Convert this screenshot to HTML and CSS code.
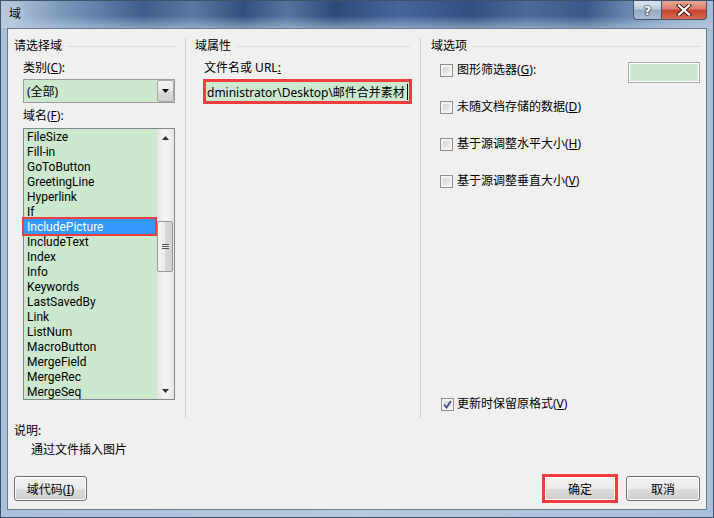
FILE: index.html
```html
<!DOCTYPE html>
<html lang="zh-CN">

<head>
  <meta charset="UTF-8">
  <title>域</title>
  <link rel="stylesheet" href="styles.css">
</head>

<body>
  <div class="window">
    <div class="titlebar">
      <span class="title">域</span>
      <div class="caption-buttons">
        <span class="cap-btn help">?</span>
        <span class="cap-btn close">
          <svg width="16" height="12" viewBox="0 0 16 12">
            <path d="M3 1.5 L13 10.5 M13 1.5 L3 10.5" stroke="#4a1d16" stroke-width="4.2" stroke-linecap="square" />
            <path d="M3 1.5 L13 10.5 M13 1.5 L3 10.5" stroke="#fff" stroke-width="2.2" stroke-linecap="square" />
          </svg>
        </span>
      </div>
    </div>

    <div class="frame">
      <div class="client">
        <div class="panes">
          <!-- 请选择域 -->
          <section class="pane pane-select">
            <div class="group-title"><span>请选择域</span></div>
            <div class="field-label">类别(<u>C</u>):</div>
            <div class="combo">
              <span class="combo-text">(全部)</span>
              <span class="combo-btn">
                <svg width="7" height="4" viewBox="0 0 7 4"><path d="M0 0 H7 L3.5 4 Z" fill="#000" /></svg>
              </span>
            </div>
            <div class="field-label list-label">域名(<u>F</u>):</div>
            <div class="listbox">
              <ul class="list-items">
                <li>FileSize</li>
                <li>Fill-in</li>
                <li>GoToButton</li>
                <li>GreetingLine</li>
                <li>Hyperlink</li>
                <li>If</li>
                <li class="selected">IncludePicture</li>
                <li>IncludeText</li>
                <li>Index</li>
                <li>Info</li>
                <li>Keywords</li>
                <li>LastSavedBy</li>
                <li>Link</li>
                <li>ListNum</li>
                <li>MacroButton</li>
                <li>MergeField</li>
                <li>MergeRec</li>
                <li>MergeSeq</li>
              </ul>
              <div class="scrollbar">
                <span class="scroll-arrow">
                  <svg width="7" height="4" viewBox="0 0 7 4"><path d="M0 4 H7 L3.5 0 Z" fill="#333" /></svg>
                </span>
                <div class="scroll-track">
                  <div class="scroll-thumb"><span class="grip"></span></div>
                </div>
                <span class="scroll-arrow">
                  <svg width="7" height="4" viewBox="0 0 7 4"><path d="M0 0 H7 L3.5 4 Z" fill="#333" /></svg>
                </span>
              </div>
            </div>
          </section>

          <!-- 域属性 -->
          <section class="pane pane-props">
            <div class="group-title"><span>域属性</span></div>
            <div class="field-label">文件名或 URL<u>:</u></div>
            <div class="textbox">
              <span class="textbox-text">dministrator\Desktop\邮件合并素材</span><span class="caret"></span>
            </div>
          </section>

          <!-- 域选项 -->
          <section class="pane pane-options">
            <div class="group-title"><span>域选项</span></div>
            <div class="option">
              <label class="check"><span class="box"></span>图形筛选器(<u>G</u>):</label>
              <span class="filter-input"></span>
            </div>
            <div class="option">
              <label class="check"><span class="box"></span>未随文档存储的数据(<u>D</u>)</label>
            </div>
            <div class="option">
              <label class="check"><span class="box"></span>基于源调整水平大小(<u>H</u>)</label>
            </div>
            <div class="option">
              <label class="check"><span class="box"></span>基于源调整垂直大小(<u>V</u>)</label>
            </div>
            <div class="option option-last">
              <label class="check">
                <span class="box checked">
                  <svg width="9" height="9" viewBox="0 0 9 9"><path d="M1 4.5 L3.5 7.5 L8 1" fill="none" stroke="#3c4f8c" stroke-width="1.8" /></svg>
                </span>更新时保留原格式(<u>V</u>)
              </label>
            </div>
          </section>
        </div>

        <div class="desc">
          <div class="desc-title">说明:</div>
          <div class="desc-text">通过文件插入图片</div>
        </div>

        <div class="actions">
          <button class="btn">域代码(<u>I</u>)</button>
          <div class="actions-right">
            <button class="btn btn-ok">确定</button>
            <button class="btn btn-cancel">取消</button>
          </div>
        </div>
      </div>
    </div>
  </div>
</body>

</html>
```

FILE: styles.css
```css
body {
  margin: 0;
  font-family: "Noto Sans", "Noto Sans CJK SC", sans-serif;
  font-size: 12px;
  color: #000;
}

.window {
  width: 714px;
  height: 518px;
  box-sizing: border-box;
  border: 1px solid #3f526b;
  display: flex;
  flex-direction: column;
  background: linear-gradient(90deg, #a9c0da 0, #b7cadf 50%, #a9c0da 100%);
}

/* title bar */
.titlebar {
  height: 27px;
  display: flex;
  justify-content: space-between;
  align-items: flex-start;
  background:
    linear-gradient(180deg, rgba(255, 255, 255, 0) 0, rgba(255, 255, 255, 0) 55%, rgba(190, 210, 232, 0.55) 100%),
    linear-gradient(90deg, #b9cadd 0, #a3b9d2 3%, #7f9abd 8%, #5e7ea8 14%, #3e5e8b 20%, #5a789f 27%, #30507e 34%, #56759e 40%, #2b4b79 47%, #46679a 56%, #2f4f7f 66%, #4b6b98 74%, #385888 82%, #6886ad 88%, #8ea8c6 94%, #a8bdd6 100%);
}

.title {
  padding-left: 8px;
  line-height: 26px;
  font-size: 12px;
  color: #000;
  text-shadow: 0 0 6px rgba(255, 255, 255, 0.9);
}

.caption-buttons {
  display: flex;
  margin-right: 6px;
}

.cap-btn {
  height: 19px;
  box-sizing: border-box;
  display: flex;
  align-items: center;
  justify-content: center;
  border: 1px solid #44556b;
  border-top: none;
}

.help {
  width: 28px;
  border-right: none;
  border-radius: 0 0 0 4px;
  background: linear-gradient(180deg, #d9e3ee 0, #bccbdc 45%, #93a8c2 50%, #a9bdd3 100%);
  color: #fff;
  font-family: "DejaVu Sans", sans-serif;
  font-weight: bold;
  font-size: 13px;
  text-shadow: 0 0 1px #1c2a3c, 0 0 1px #1c2a3c, 0 0 2px #1c2a3c;
}

.close {
  width: 46px;
  border-radius: 0 0 4px 0;
  background: linear-gradient(180deg, #e8a797 0, #dc7e6b 45%, #c5412c 50%, #d76a53 100%);
}

/* frame and client area */
.frame {
  flex: 1;
  display: flex;
  padding: 0 6px 7px 6px;
}

.client {
  flex: 1;
  border: 1px solid #6b7b90;
  background-color: #f0f0f0;
  display: flex;
  flex-direction: column;
}

.panes {
  display: flex;
  height: 380px;
  margin-top: 9px;
}

.pane {
  display: flex;
  flex-direction: column;
  box-sizing: border-box;
}

.pane-select {
  width: 178px;
  padding: 0 10px 0 6px;
  border-right: 1px solid #cfcfcf;
}

.pane-props {
  width: 235px;
  padding: 0 10px 0 9px;
  border-right: 1px solid #cfcfcf;
}

.pane-options {
  flex: 1;
  padding: 0 5px 0 10px;
}

.group-title {
  display: flex;
  align-items: center;
  line-height: 16px;
}

.group-title::after {
  content: "";
  flex: 1;
  height: 1px;
  margin-left: 5px;
  background-color: #d5dfe5;
}

.field-label {
  margin: 6px 0 0 9px;
  line-height: 16px;
}

.list-label {
  margin-top: 5px;
}

/* combo box */
.combo {
  margin: 3px 0 0 9px;
  height: 24px;
  box-sizing: border-box;
  border: 1px solid #9c9c9c;
  background-color: #cce8cf;
  display: flex;
  align-items: center;
  justify-content: space-between;
}

.combo-text {
  padding-left: 3px;
}

.combo-btn {
  width: 17px;
  height: 22px;
  box-sizing: border-box;
  border: 1px solid #a8a8a8;
  border-radius: 2px;
  background: linear-gradient(180deg, #f4f4f4 0, #e9e9e9 50%, #dadada 51%, #d0d0d0 100%);
  display: flex;
  align-items: center;
  justify-content: center;
}

/* list box */
.listbox {
  margin: 4px 0 0 9px;
  height: 272px;
  box-sizing: border-box;
  border: 1px solid #828790;
  background-color: #cce8cf;
  display: flex;
}

.list-items {
  flex: 1;
  list-style: none;
  margin: 0;
  padding: 0;
  font-family: Roboto, "Noto Sans", sans-serif;
}

.list-items li {
  line-height: 14px;
  height: 15px;
  box-sizing: border-box;
  padding: 1px 0 0 3px;
  white-space: nowrap;
}

.list-items li.selected {
  margin-right: 2px;
  background-color: #3399ff;
  color: #fff;
  outline: 2px solid #f03c3c;
  position: relative;
}

.scrollbar {
  width: 17px;
  display: flex;
  flex-direction: column;
  background: linear-gradient(90deg, #e2e2e2 0, #f2f2f2 35%, #f2f2f2 65%, #e6e6e6 100%);
}

.scroll-arrow {
  height: 17px;
  display: flex;
  align-items: center;
  justify-content: center;
}

.scroll-track {
  flex: 1;
}

.scroll-thumb {
  margin: 75px 1px 0 0;
  height: 51px;
  box-sizing: border-box;
  border: 1px solid #979797;
  border-radius: 2px;
  background: linear-gradient(90deg, #f3f3f3 0, #ebebeb 50%, #d9d9d9 51%, #d0d0d0 100%);
  display: flex;
  align-items: center;
  justify-content: center;
}

.grip {
  width: 7px;
  height: 5px;
  background: repeating-linear-gradient(180deg, #555 0, #555 1px, #eee 1px, #eee 2px);
}

/* text box */
.textbox {
  margin: 3px 0 0 8px;
  width: 209px;
  height: 25px;
  box-sizing: border-box;
  border: 3px solid #f03c3c;
  background-color: #cce8cf;
  display: flex;
  align-items: center;
  padding-left: 1px;
  white-space: nowrap;
  overflow: hidden;
}

.caret {
  width: 1px;
  height: 16px;
  margin-left: 2px;
  background-color: #000;
}

/* options */
.option {
  height: 37px;
  margin-left: 9px;
  display: flex;
  justify-content: space-between;
  align-items: flex-start;
}

.pane-options .group-title + .option {
  margin-top: 8px;
}

.option-last {
  margin-top: auto;
  height: 16px;
  margin-bottom: 6px;
}

.check {
  display: flex;
  align-items: center;
  line-height: 16px;
}

.box {
  width: 13px;
  height: 13px;
  box-sizing: border-box;
  margin-right: 4px;
  border: 1px solid #8e8f8f;
  background: linear-gradient(135deg, #cdcdcd 0, #f6f6f6 100%);
  box-shadow: inset 0 0 0 2px #f4f4f4;
  display: flex;
  align-items: center;
  justify-content: center;
}

.box.checked {
  margin-left: 1px;
  margin-right: 3px;
}

.filter-input {
  width: 72px;
  height: 21px;
  box-sizing: border-box;
  margin-right: 1px;
  border: 1px solid #a8a8a8;
  box-shadow: inset 0 0 0 1px #fff;
  background-color: #cce8cf;
}

/* description */
.desc {
  padding-left: 6px;
  margin-top: 5px;
  line-height: 16px;
}

.desc-text {
  margin: 3px 0 0 17px;
}

/* buttons */
.actions {
  display: flex;
  justify-content: space-between;
  padding: 0 6px 0 6px;
  margin-top: 18px;
}

.actions-right {
  display: flex;
  gap: 10px;
}

.btn {
  height: 25px;
  width: 73px;
  box-sizing: border-box;
  border: 1px solid #707070;
  border-radius: 3px;
  background: linear-gradient(180deg, #f2f2f2 0, #ebebeb 50%, #dddddd 51%, #cfcfcf 100%);
  box-shadow: inset 0 0 0 1px #fcfcfc;
  font-family: "Noto Sans", "Noto Sans CJK SC", sans-serif;
  font-size: 12px;
  color: #000;
  padding: 0;
}

.btn-ok {
  width: 72px;
  border-color: #f03c3c;
  border-radius: 0;
  outline: 2px solid #f03c3c;
}

.btn-cancel {
  width: 74px;
}
```
